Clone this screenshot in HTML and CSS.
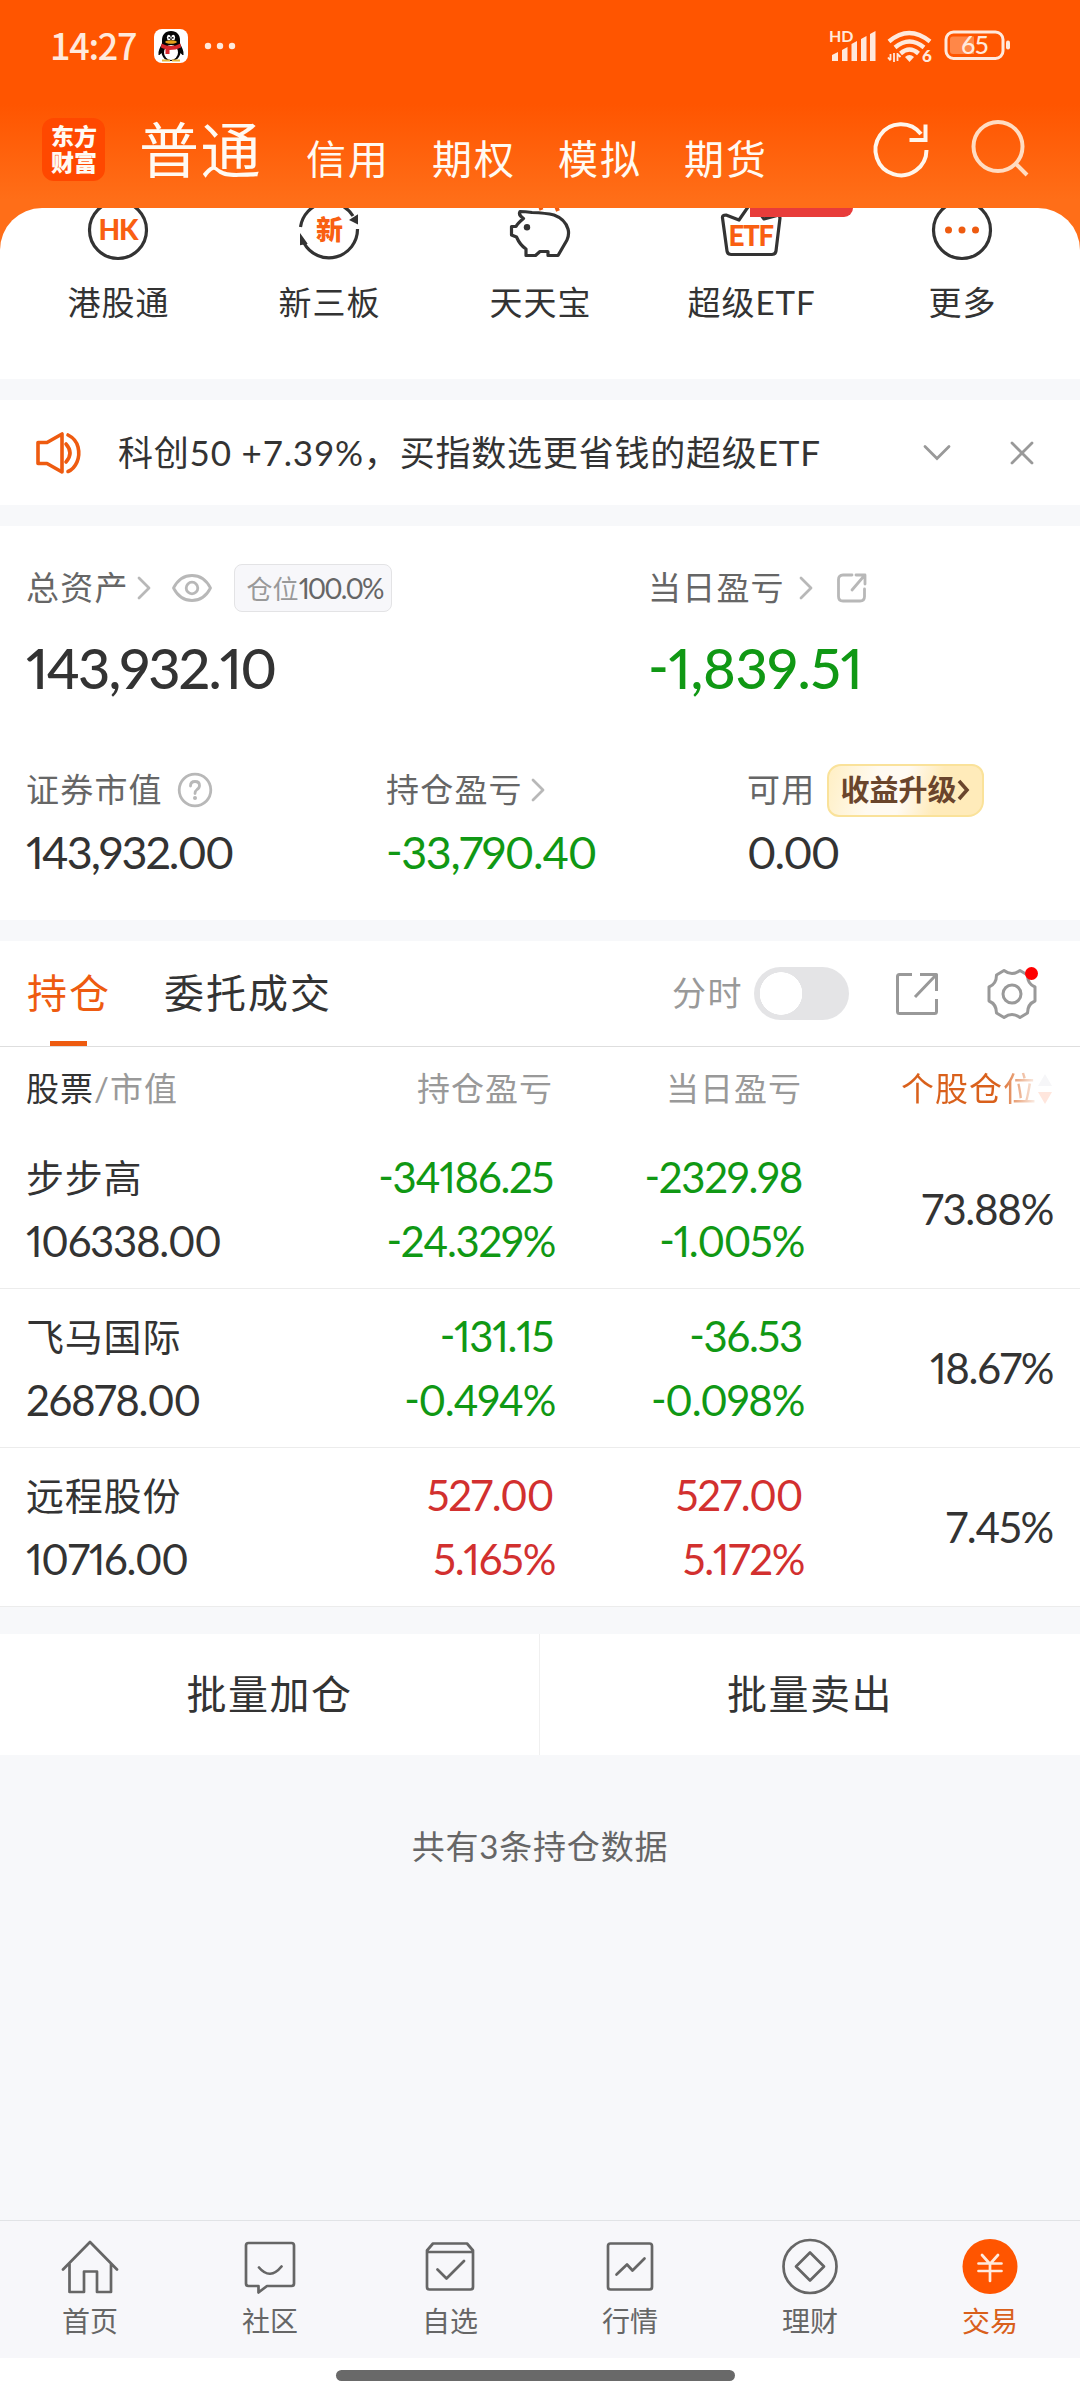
FILE: index.html
```html
<!DOCTYPE html>
<html lang="zh-CN">
<head>
<meta charset="UTF-8">
<meta name="viewport" content="width=device-width, initial-scale=1.0">
<title>东方财富 - 交易</title>
<link rel="stylesheet" href="styles.css">
</head>

<body>

<div class="top">
<div class="status">
<span class="time">14:27</span>
<svg class="qq" width="34" height="34" viewBox="0 0 34 34">
<rect width="34" height="34" rx="8" fill="#fff"/>
<path d="M17 2c-6 0-9 4-9 9v4c-2 3-4 7-3.500 11 1 .5 2-1 3-2 1 5 4.500 8 9.500 8s8.500-3 9.500-8c1 1 2 2.500 3 2 .5-4-1.500-8-3.500-11v-4c0-5-3-9-9-9z" fill="#060606"/>
<ellipse cx="17" cy="23.500" rx="7" ry="7.500" fill="#fff"/>
<ellipse cx="14.800" cy="8.500" rx="1.900" ry="2.700" fill="#fff"/><ellipse cx="19.200" cy="8.500" rx="1.900" ry="2.700" fill="#fff"/>
<circle cx="15.200" cy="8.800" r=".9"/><circle cx="18.800" cy="8.800" r=".9"/>
<ellipse cx="17" cy="13" rx="5.800" ry="1.700" fill="#e8a11c"/>
<path d="M7.500 14.500q9.500 5 19 0l.5 4q-5 2.500-11.500 2.500v4h-4v-5q-2.500-.5-4.500-1.500z" fill="#d9272d"/>
<path d="M8 31.500h8M18 31.500h8" stroke="#e8b73c" stroke-width="2"/>
</svg>
<svg class="dots" width="32" height="8" viewBox="0 0 32 8" fill="#ffe9dc"><circle cx="4" cy="4" r="3.200"/><circle cx="16" cy="4" r="3.200"/><circle cx="28" cy="4" r="3.200"/></svg>
<svg class="signal" width="184" height="34" viewBox="0 0 184 34" fill="#ffe9dc">
<text x="0" y="13" class="hd">HD</text>
<path d="M3 26l6-3v9H3zM13 21l5.500-3v14H13zM22.500 15l5.500-3v20h-5.500zM32 10l5.500-3v25H32zM41 5l5.500-3v30H41z"/>
<g fill="none" stroke="#ffe9dc" stroke-width="4.400"><path d="M60 12.500q20-17 41 0"/><path d="M66 18.500q14.500-12 29 0"/><path d="M71.500 24.500q9-8 18 0"/></g>
<path d="M76 28q4.500-4 9 0l-4.500 5z"/>
<path d="M61.500 25v6M65 24v9M68.500 24v8M59 28.500l2.500 3M71.500 28l-3-3" stroke="#ffe9dc" stroke-width="1.800"/>
<text x="93" y="33" class="wifi6">6</text>
<rect x="117" y="3" width="57" height="26.500" rx="7.500" fill="none" stroke="#ffe9dc" stroke-width="3"/>
<path d="M124 7.500h21v17.500h-21q-3 0-3-3V10.500q0-3 3-3z" fill="#ff8748"/>
<rect x="177" y="11.500" width="4" height="9" rx="2"/>
<text x="132" y="25" class="batt">65</text>
</svg>
</div>

<div class="header">
<div class="logo">东方<br>财富</div>
<span class="acc on">普通</span>
<span class="acc">信用</span>
<span class="acc">期权</span>
<span class="acc">模拟</span>
<span class="acc">期货</span>
<svg class="refresh" width="60" height="60" viewBox="0 0 60 60" fill="none" stroke="#fff6ec" stroke-width="4"><path d="M55.500 31A25.500 25.500 0 1 1 50 15"/><path d="M54.500 5.500V21H38.500"/></svg>
<svg width="60" height="60" viewBox="0 0 60 60" fill="none" stroke="#ffdcc2" stroke-width="4"><circle cx="28" cy="27.500" r="24.500"/><path d="M45 44l12 12"/></svg>
</div>
</div>

<div class="sheet">
<div class="tool">
<svg width="64" height="56" viewBox="0 0 64 56"><circle cx="32" cy="22" r="28.500" class="ink"/><text x="32" y="32" class="icotext">HK</text></svg>
<span>港股通</span>
</div>
<div class="tool">
<svg width="64" height="56" viewBox="0 0 64 56"><path d="M3.500 19A28.500 28.500 0 0 1 56 8" class="ink"/><path d="M60.500 21A28.500 28.500 0 0 1 7 35" class="ink"/><path d="M60 8v7l-6-3zM4 28l5 7-5 1z" fill="#333" stroke="#333" stroke-width="2"/><text x="32" y="32" class="icotext small">新</text></svg>
<span>新三板</span>
</div>
<div class="tool">
<svg width="64" height="56" viewBox="0 0 64 56"><path d="M24 4.500Q17 3.500 12 3.500 10 7 15.500 10.500 10 15 8 18.500H3.500V27L8.500 29Q12 37 18 41V47.500H27.500L32 43.500H40V47.500H50L59 32Q61.500 26 60 21 57 11 46 7 38 5 24 4.500z" class="ink"/><circle cx="19" cy="19.300" r="3.200" fill="#333"/><path d="M32-2l1.500 4M48-2l2 5" fill="none" stroke="#ee5b10" stroke-width="4"/></svg>
<span>天天宝</span>
</div>
<div class="tool">
<svg width="64" height="56" viewBox="0 0 64 56"><path d="M29-1L20 12 7 7q-4 0-3.500 3L8 43q.5 3.500 4 3.500h41q3.500 0 4-3.500l4-33-1-3-15 4L36-1" class="ink"/><text x="31" y="38" class="icotext etf">ETF</text></svg>
<span>超级ETF</span>
<i class="tag"></i>
</div>
<div class="tool">
<svg width="64" height="56" viewBox="0 0 64 56"><circle cx="32" cy="22" r="28.500" class="ink"/><g fill="#ee5b10"><circle cx="18.500" cy="22" r="3.500"/><circle cx="32" cy="22" r="3.500"/><circle cx="45.500" cy="22" r="3.500"/></g></svg>
<span>更多</span>
</div>
</div>

<div class="notice">
<svg width="48" height="44" viewBox="0 0 48 44" fill="none" stroke="#ee5b10" stroke-width="3.600" stroke-linejoin="round" stroke-linecap="round"><path d="M4 11.500h9L28 3v38L13 32.500H4z"/><path d="M32 13q8 9 0 18M34 4q8 4 10 12t-1 15q-3 7-9 9.500"/></svg>
<span>科创50 +7.39%，买指数选更省钱的超级ETF</span>
<svg class="down" width="30" height="30" viewBox="0 0 30 30"><path d="M3 8.500l12 12 12-12" class="line"/></svg>
<svg width="30" height="30" viewBox="0 0 30 30"><path d="M5 5l20 20M25 5L5 25" class="line"/></svg>
</div>

<div class="assets">
<div class="row main">
<div class="item">
<div class="label">总资产<svg class="arrow" width="18" height="26" viewBox="0 0 18 26"><path d="M4 3l10 10-10 10" class="soft"/></svg>
<svg class="eye" width="42" height="30" viewBox="0 0 42 30"><path d="M2.500 15Q9 2.500 21 2.500T39.500 15Q33 27.500 21 27.500T2.500 15z" class="soft"/><circle cx="21" cy="15" r="5.800" class="soft"/></svg>
<span class="pos">仓位<b>100.0%</b></span></div>
<div class="big">143,932.10</div>
</div>
<div class="item">
<div class="label">当日盈亏<svg class="arrow wide" width="18" height="26" viewBox="0 0 18 26"><path d="M4 3l10 10-10 10" class="soft"/></svg>
<svg class="share" width="32" height="32" viewBox="0 0 32 32"><path d="M16 3H7Q2.500 3 2.500 7.500v17Q2.500 29 7 29h17q4.500 0 4.500-4.500V17M16 18L28 4M20 3h9v9" class="soft"/></svg></div>
<div class="big green">-1,839.51</div>
</div>
</div>

<div class="row sub">
<div class="item">
<div class="label">证券市值<svg class="help" width="36" height="36" viewBox="0 0 36 36"><circle cx="18" cy="18" r="15.800" class="soft"/><path d="M13.500 14q0-4.500 4.500-4.500t4.500 4q0 2.500-2.500 4-2 1.500-2 4" class="soft"/><circle cx="18" cy="26" r="2" fill="#b8b8b8"/></svg></div>
<div class="mid">143,932.00</div>
</div>
<div class="item">
<div class="label">持仓盈亏<svg class="arrow" width="18" height="26" viewBox="0 0 18 26"><path d="M4 3l10 10-10 10" class="soft"/></svg></div>
<div class="mid green">-33,790.40</div>
</div>
<div class="item">
<div class="label">可用<span class="upgrade">收益升级<svg width="14" height="24" viewBox="0 0 14 24"><path d="M3 3l8 9-8 9" fill="none" stroke="#6a452c" stroke-width="3.600"/></svg></span></div>
<div class="mid">0.00</div>
</div>
</div>
</div>

<div class="tabs">
<span class="tab on">持仓</span>
<span class="tab">委托成交</span>
<span class="fs">分时</span>
<i class="switch"></i>
<svg class="open" width="46" height="46" viewBox="0 0 46 46"><path d="M18 3.500H5.500q-2 0-2 2v35q0 2 2 2h35q2 0 2-2V28M21 26L42 4M26 3.500h16.500V20" class="gray"/></svg>
<span class="gear">
<svg width="52" height="52" viewBox="0 0 52 52"><path d="M18 2.500q8 6 16 0l7.500 4.500q0 9 7.500 12v14q-7.500 3-7.500 12L34 49.500q-8-6-16 0L10.500 45q0-9-7.500-12V19q7.500-3 7.500-12z" class="gray"/><circle cx="26" cy="26" r="9" class="gray"/></svg>
<i class="dot"></i>
</span>
</div>

<div class="table">
<div class="tr th">
<div><em>股票</em>/市值</div><div>持仓盈亏</div><div>当日盈亏</div>
<div class="sort">个股仓位<svg width="16" height="34" viewBox="0 0 16 34"><path d="M1 14l7-12 7 12z" fill="#f6f6f8"/><path d="M1 20l7 12 7-12z" fill="#ffe6dd"/></svg></div>
</div>
<div class="tr">
<div><p class="name">步步高</p><p>106338.00</p></div>
<div class="green"><p>-34186.25</p><p class="pct">-24.329%</p></div>
<div class="green"><p>-2329.98</p><p class="pct">-1.005%</p></div>
<div>73.88%</div>
</div>
<div class="tr">
<div><p class="name">飞马国际</p><p>26878.00</p></div>
<div class="green"><p>-131.15</p><p class="pct">-0.494%</p></div>
<div class="green"><p>-36.53</p><p class="pct">-0.098%</p></div>
<div>18.67%</div>
</div>
<div class="tr">
<div><p class="name">远程股份</p><p>10716.00</p></div>
<div class="red"><p>527.00</p><p class="pct">5.165%</p></div>
<div class="red"><p>527.00</p><p class="pct">5.172%</p></div>
<div>7.45%</div>
</div>
</div>

<div class="batch">
<div>批量加仓</div>
<div>批量卖出</div>
</div>

<div class="total">共有3条持仓数据</div>

<div class="nav">
<div><svg width="60" height="60" viewBox="0 0 60 60"><path d="M3 32.500L30 5l27 27.500M9.500 27v28H24V34.500h13V55h14V27"/></svg>首页</div>
<div><svg width="60" height="60" viewBox="0 0 60 60"><path d="M8.500 6h43q2.500 0 2.500 2.500v38q0 2.500-2.500 2.500H27l-8.500 6.500V49h-10Q6 49 6 46.500v-38Q6 6 8.500 6zM19 30.500q11 13 22.500-1"/></svg>社区</div>
<div><svg width="60" height="60" viewBox="0 0 60 60"><path d="M13 6.500h34L53 13.500V50q0 2.500-2.500 2.500h-41Q7 52.500 7 50V13.500zM7 15h46M17.500 32.500l9 9L44 24"/></svg>自选</div>
<div><svg width="60" height="60" viewBox="0 0 60 60"><rect x="8" y="6.500" width="44" height="46" rx="2.500"/><path d="M16.500 37.500L27 27.500l5.500 6 12-12"/></svg>行情</div>
<div><svg width="60" height="60" viewBox="0 0 60 60"><circle cx="30" cy="29.500" r="26.500"/><path d="M30 15.500l14 14-14 14-14-14z"/></svg>理财</div>
<div class="on"><svg width="60" height="60" viewBox="0 0 60 60"><circle cx="30" cy="29.500" r="27.500" class="coin"/><path d="M22 18l8 9 8-9M18.500 26.500h23M18.500 34h23M30 27v17" class="yen"/></svg>交易</div>
</div>
<div class="home"><i></i></div>

</body>
</html>
```
FILE: styles.css
```css
*{box-sizing:border-box;margin:0;padding:0;}

body{
    width:1080px;
    height:2400px;
    display:flex;
    flex-direction:column;
    background:#f7f8fa;
    color:#333;
    font-family:Lato,"Noto Sans CJK SC",sans-serif;
    font-size:33px;
    line-height:1.2;
    white-space:nowrap;
    overflow:hidden;
}
svg{display:block;flex:none;overflow:visible;}
i,em,b{font-style:normal;font-weight:normal;}

.top{
    height:250px;
    margin-bottom:-42px;
    flex:none;
    background:linear-gradient(#ff5500 0,#ff5500 104px,#ff6e18 200px);
}

/* status bar */
.status{
    height:92px;
    display:flex;
    align-items:center;
    padding:0 67px 0 50px;
    color:#ffe9dc;
}
.time{
    width:104px;
    margin-top:-3px;
    font-family:"Noto Sans CJK SC",sans-serif;
    font-size:36px;
    font-weight:500;
    letter-spacing:-1.300px;
}
.dots{margin-left:16px;}
.signal{margin-left:auto;}
.hd{font:bold 16px Lato,sans-serif;}
.wifi6{font:900 17px Lato,sans-serif;}
.batt{font:500 25px Lato,sans-serif;letter-spacing:-1px;}

/* account header */
.header{
    height:114px;
    display:flex;
    align-items:center;
    padding:0 50px 0 42px;
    color:#fffaf3;
}
.logo{
    width:63px;
    height:63px;
    border-radius:12px;
    background:#ff4800;
    padding:5px 0 0 9px;
    font-size:23px;
    font-weight:900;
    line-height:26px;
}
.acc{
    font-size:40px;
    letter-spacing:2px;
    margin:19px 42px 0 0;
}
.acc.on{
    font-size:60px;
    letter-spacing:1.500px;
    margin:1px 44px 0 34px;
}
.refresh{margin:0 39px 0 auto;}

/* shortcut tools, scrolled under the header */
.sheet{
    height:171px;
    flex:none;
    display:flex;
    padding:0 13px 0 12px;
    background:#fff;
    border-radius:42px 42px 0 0;
    overflow:hidden;
}
.tool{
    position:relative;
    flex:1;
    display:flex;
    flex-direction:column;
    align-items:center;
    gap:19px;
}
.tool span{
    padding-left:2px;
    letter-spacing:1px;
}
.ink{fill:none;stroke:#333;stroke-width:3.200;stroke-linejoin:round;}
.icotext{
    font:900 28px Lato,"Noto Sans CJK SC",sans-serif;
    letter-spacing:-1px;
    fill:#f95f12;
    text-anchor:middle;
}
.icotext.small{font-size:27px;}
.icotext.etf{font:bold 28px "Noto Sans CJK SC",sans-serif;letter-spacing:-2.400px;}
.tag{
    position:absolute;
    left:105px;
    top:0;
    width:103px;
    height:9px;
    background:#e83c3a;
    border-radius:0 0 16px 0;
}

.notice{
    height:105px;
    flex:none;
    display:flex;
    align-items:center;
    margin:21px 0;
    padding:0 43px 0 34px;
    background:#fff;
    font-size:35px;
    letter-spacing:.8px;
}
.notice span{margin:-2px 0 0 36px;}
.down{margin:0 55px 0 auto;}
.line{fill:none;stroke:#999;stroke-width:2.800;stroke-linecap:round;}
.soft{fill:none;stroke:#b8b8b8;stroke-width:2.800;stroke-linecap:round;stroke-linejoin:round;}
.gray{fill:none;stroke:#999;stroke-width:3;stroke-linejoin:round;}

/* assets */
.assets{
    height:394px;
    flex:none;
    padding:37px 0 0 26px;
    background:#fff;
}
.row{display:grid;}
.main{grid-template-columns:622px 1fr;height:202px;}
.sub{grid-template-columns:360px 361px 1fr;}
.label{
    height:50px;
    display:flex;
    align-items:center;
    color:#666;
    letter-spacing:1.200px;
}
.arrow{margin-left:6px;}
.arrow.wide{margin-left:12px;}
.eye{margin-left:18px;}
.share{margin-left:21px;}
.help{margin-left:14px;}
.pos{
    height:48px;
    margin-left:21px;
    padding:0 8px 0 12px;
    line-height:46px;
    border:1px solid #e3e3e5;
    border-radius:8px;
    background:#f7f7fa;
    color:#999;
    font-size:26px;
    letter-spacing:0;
}
.big,.mid,.tr p,.tr div,.pos b{
    font-variant-numeric:proportional-nums;
    font-feature-settings:"case";
    font-kerning:none;
}
.pos b{color:#666;font-size:28px;letter-spacing:-1.900px;}
.big{
    margin-top:23px;
    font-size:56px;
    line-height:64px;
    letter-spacing:-1.900px;
    font-weight:500;
}
.big.green{letter-spacing:-.4px;}
.mid{
    margin-top:10px;
    font-size:45px;
    line-height:54px;
    letter-spacing:-2px;
}
.mid.green{letter-spacing:-1.400px;}
.upgrade{
    display:flex;
    align-items:center;
    width:157px;
    height:53px;
    margin-left:12px;
    padding-left:11px;
    border:2px solid #fae29a;
    border-radius:14px 12px 16px 12px;
    background:linear-gradient(105deg,#ffefc4 0,#fffaf0 30%,#fffaf2 48%,#ffebba 70%,#ffebba 100%);
    color:#6a452c;
    font-size:29px;
    font-weight:bold;
    letter-spacing:0;
}
.green{color:#109814;}
.red{color:#d2302f;}

/* holdings */
.tabs{
    height:106px;
    flex:none;
    display:flex;
    align-items:center;
    margin-top:21px;
    padding:0 42px 0 27px;
    background:#fff;
    border-bottom:1px solid #dedede;
}
.tab{
    height:105px;
    line-height:104px;
    font-size:40px;
    letter-spacing:2px;
    margin-right:53px;
}
.tab.on{
    color:#ee5b10;
    background:linear-gradient(#ee5b10,#ee5b10) 23px 100%/37px 5px no-repeat;
}
.fs{margin-left:auto;color:#999;font-size:34px;letter-spacing:1.500px;}
.switch{
    width:95px;
    height:53px;
    margin:0 45px 0 11px;
    border-radius:27px;
    background:radial-gradient(circle at 27px 50%,#fff 21px,#e4e4e6 21.500px);
}
.open{margin-right:46px;}
.gear{position:relative;}
.dot{
    position:absolute;
    right:0;
    top:-1px;
    width:13px;
    height:13px;
    border-radius:50%;
    background:#f00;
}

.table{background:#fff;flex:none;}
.tr{
    height:159px;
    display:grid;
    grid-template-columns:271px 256px 249px 251px;
    align-items:center;
    padding:0 27px 0 26px;
    border-bottom:1px solid #ececec;
    font-size:42px;
    letter-spacing:-1.300px;
    text-align:right;
}
.tr>div:first-child{text-align:left;}
.tr p{line-height:64px;}
.tr .name{font-size:38px;letter-spacing:.8px;}
.tr .pct{margin-right:-2px;}
.th{
    height:83px;
    border:0;
    color:#999;
    font-size:33px;
    letter-spacing:1px;
}
.th em{color:#333;}
.sort{
    display:flex;
    justify-content:flex-end;
    align-items:center;
    color:transparent;
    background:linear-gradient(90deg,#d9601b 0,#d9601b 195px,#fff 238px);
    -webkit-background-clip:text;
    background-clip:text;
}

.batch{
    display:grid;
    grid-template-columns:539px 1fr;
    height:121px;
    flex:none;
    margin-top:27px;
    background:#fff;
    font-size:40px;
    line-height:120px;
    letter-spacing:1.500px;
    text-align:center;
}
.batch div+div{border-left:1px solid #f0f0f0;}
.total{
    flex:1;
    padding-top:72px;
    color:#666;
    font-size:33px;
    letter-spacing:.8px;
    text-align:center;
}

.nav{
    height:138px;
    flex:none;
    display:grid;
    grid-template-columns:repeat(6,1fr);
    padding-top:16px;
    background:#f7f7fa;
    border-top:1px solid #e1e3e6;
    color:#666;
    font-size:28px;
    line-height:36px;
}
.nav div{display:flex;flex-direction:column;align-items:center;gap:6px;}
.nav svg{fill:none;stroke:#666;stroke-width:2.700;stroke-linejoin:round;stroke-linecap:round;}
.nav .on{color:#d9601b;}
.nav .coin{fill:#ff5500;stroke:none;}
.nav .yen{stroke:#ffeadd;}

.home{height:42px;flex:none;padding:12px 0 0 336px;background:#fff;}
.home i{
    display:block;
    width:399px;
    height:11px;
    border-radius:6px;
    background:#696969;
}
```
